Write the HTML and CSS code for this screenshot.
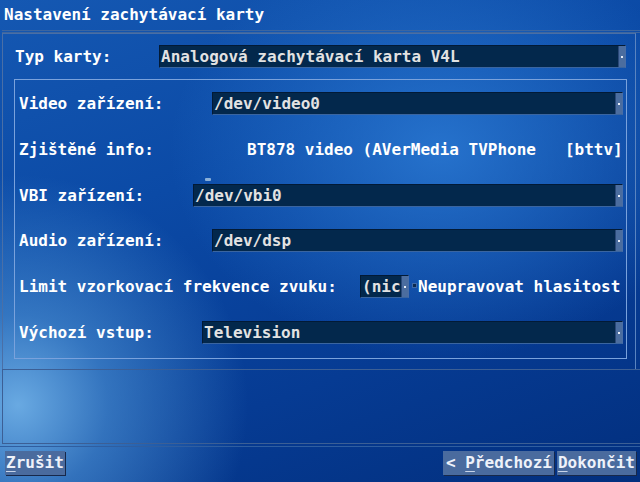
FILE: index.html
```html
<!DOCTYPE html>
<html lang="cs">
<head>
<meta charset="utf-8">
<title>Nastavení zachytávací karty</title>
<link rel="stylesheet" href="styles.css">
</head>
<body>
<div class="screen">
  <div class="title">Nastavení zachytávací karty</div>
  <div class="title-rule"></div>
  <div class="outer">
    <div class="row top-row">
      <span class="label l-typ">Typ karty:</span>
      <div class="combo"><span class="val">Analogová zachytávací karta V4L</span><span class="spin"></span></div>
    </div>
    <div class="group">
      <div class="row">
        <span class="label l-video">Video zařízení:</span>
        <div class="combo"><span class="val">/dev/video0</span><span class="spin"></span></div>
      </div>
      <div class="row">
        <span class="label l-info">Zjištěné info:</span>
        <span class="info">BT878 video (AVerMedia TVPhone &nbsp; [bttv]</span>
        <span class="blip"></span>
      </div>
      <div class="row">
        <span class="label l-vbi">VBI zařízení:</span>
        <div class="combo"><span class="val">/dev/vbi0</span><span class="spin"></span></div>
      </div>
      <div class="row">
        <span class="label l-video">Audio zařízení:</span>
        <div class="combo"><span class="val">/dev/dsp</span><span class="spin"></span></div>
      </div>
      <div class="row">
        <span class="label l-limit">Limit vzorkovací frekvence zvuku:</span>
        <div class="combo small"><span class="val">(nic</span><span class="spin"></span></div>
        <span class="check"></span>
        <span class="check-label">Neupravovat hlasitost</span>
      </div>
      <div class="row">
        <span class="label l-vstup">Výchozí vstup:</span>
        <div class="combo"><span class="val">Television</span><span class="spin"></span></div>
      </div>
    </div>
  </div>
  <div class="help"></div>
  <div class="buttons">
    <button class="btn"><u>Z</u>rušit</button>
    <span class="spacer"></span>
    <button class="btn btn-prev">&lt; <u>P</u>ředchozí</button>
    <button class="btn"><u>D</u>okončit</button>
  </div>
</div>
</body>
</html>
```
FILE: styles.css
```css
html, body {
  margin: 0;
  padding: 0;
}
body {
  width: 640px;
  height: 482px;
  overflow: hidden;
  font-family: "DejaVu Sans Mono", "Liberation Mono", monospace;
  font-weight: bold;
  font-size: 16px;
  color: #ffffff;
  background:
    radial-gradient(circle at 18px 405px, rgba(110, 175, 230, 0.95) 0px, rgba(80, 150, 215, 0.6) 90px, rgba(30, 100, 190, 0) 230px),
    radial-gradient(ellipse 270px 210px at 440px 150px, rgba(45, 125, 215, 0.8) 0px, rgba(30, 100, 200, 0) 100%),
    linear-gradient(160deg, #1558b2 0%, #0b4aa6 35%, #063b93 70%, #022f7e 100%);
}
.screen {
  position: relative;
  width: 640px;
  height: 482px;
  display: flex;
  flex-direction: column;
}
.title {
  height: 30px;
  line-height: 30px;
  padding-left: 4px;
}
.title-rule {
  margin-left: 2px;
  height: 0;
  border-top: 1px solid #3c66a0;
  border-bottom: 1px solid #3c66a0;
  padding-top: 1px;
  box-sizing: content-box;
}
.outer {
  margin-left: 2px;
  width: 634px;
  height: 336px;
  box-sizing: border-box;
  border-left: 1px solid #4a6fa6;
  border-top: 1px solid #4a6fa6;
  border-right: 1px solid #5a84c0;
  display: flex;
  flex-direction: column;
}
.row {
  display: flex;
  align-items: center;
  position: relative;
}
.top-row {
  height: 45px;
  padding-left: 12px;
  padding-right: 9px;
}
.label {
  flex: none;
  white-space: pre;
}
.l-typ { width: 144px; }
.l-video { width: 193px; }
.l-info { width: 228px; }
.l-vbi { width: 174px; }
.l-limit { width: 341px; }
.l-vstup { width: 183px; }
.combo {
  flex: 1;
  height: 23px;
  box-sizing: border-box;
  background: #03284c;
  border-top: 1px solid #021a36;
  border-left: 1px solid #021a36;
  border-bottom: 1px solid #3a65a0;
  border-right: 1px solid #4a6ea6;
  display: flex;
  align-items: center;
  color: #e2e2e2;
}
.combo .val {
  flex: 1;
  padding-left: 1px;
  white-space: pre;
  overflow: hidden;
}
.combo .spin {
  position: relative;
  flex: none;
  width: 6px;
  height: 21px;
  background: #4b6d9f;
  border-left: 1px solid #2a4878;
}
.combo .spin::after {
  content: "";
  position: absolute;
  left: 2px;
  top: 10px;
  width: 2px;
  height: 2px;
  background: #e8eef8;
}
.combo.small {
  flex: none;
  width: 49px;
}
.check {
  flex: none;
  width: 3px;
  height: 3px;
  margin-left: 3px;
  margin-right: 1px;
  margin-top: -2px;
  background: #0a2a50;
  border: 1px solid #3e6aa6;
}
.check-label,
.info {
  white-space: pre;
}
.blip {
  position: absolute;
  left: 186px;
  top: 51px;
  width: 6px;
  height: 3px;
  background: #8ab0d8;
  border-radius: 1px;
}
.group {
  margin-left: 11px;
  margin-right: 8px;
  height: 280px;
  box-sizing: border-box;
  border: 1px solid #7aa2dc;
  padding: 1px 4px 0 4px;
  display: grid;
  grid-template-rows: repeat(6, 45.7px);
}
.help {
  margin-left: 2px;
  height: 75px;
  border-top: 1px solid #3c5f95;
  border-left: 1px solid #3c5f95;
  border-bottom: 1px solid #3c5f95;
  box-sizing: border-box;
}
.buttons {
  border-top: 1px solid #2f5ea0;
  margin-top: 2px;
  padding: 4px 4px 0 5px;
  display: flex;
  gap: 3px;
}
.spacer { flex: 1; }
.btn {
  font: inherit;
  color: #eef2fa;
  background: #4a6b9e;
  border: none;
  box-shadow: 1px 1px 0 #17284a;
  height: 24px;
  padding: 0 1px;
  margin: 0;
  line-height: 24px;
  cursor: default;
}
.btn-prev {
  padding: 0 2px 0 3px;
}
.btn u {
  text-decoration-color: #c8d4e8;
  text-underline-offset: 3px;
}
```
